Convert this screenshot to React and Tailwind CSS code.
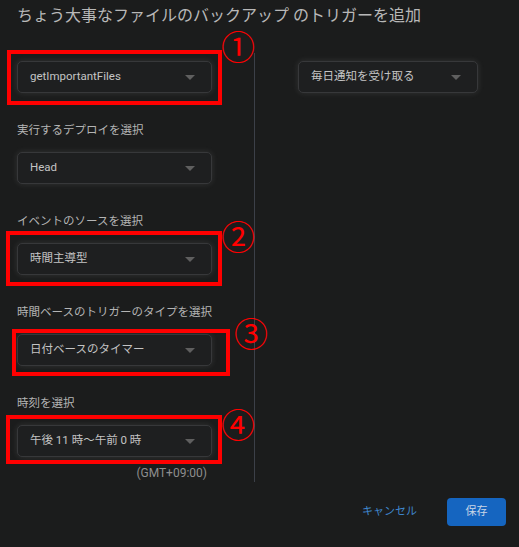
import React from "react";

const FONT = { fontFamily: "Roboto, 'Noto Sans CJK JP', 'Noto Sans', sans-serif" };

function Caret() {
  return (
    <svg width="10" height="5" viewBox="0 0 10 5" className="shrink-0">
      <path d="M0 0 L10 0 L5 5 Z" fill="#5f5f5f" />
    </svg>
  );
}

function Select({ value, className = "" }) {
  return (
    <div
      className={`h-8 flex items-center justify-between pl-3 pr-4 rounded-[5px] bg-[#1e1f20] border border-[#37383a] shadow-[0_0_6px_rgba(200,200,200,0.14)] ${className}`}
    >
      <span className="text-[11.5px] text-[#c4c4c4] whitespace-nowrap">{value}</span>
      <Caret />
    </div>
  );
}

// red annotation frame + circled number drawn over a select
function Marked({ value, frame, badge, num }) {
  return (
    <div className="relative">
      <Select value={value} className="w-[195px]" />
      <div className={`absolute border-[4px] border-[#ff0000] pointer-events-none ${frame}`} />
      <span
        className={`absolute text-[34px] leading-none text-[#ff0000] ${badge}`}
        style={{ fontFamily: "'Noto Sans CJK JP', sans-serif" }}
      >
        {num}
      </span>
    </div>
  );
}

function Label({ children }) {
  return <div className="mt-[29px] h-4 leading-4 text-[11.5px] text-[#b4b4b4]">{children}</div>;
}

export default function App() {
  return (
    <div className="w-[519px] h-[547px] bg-[#1b1c1c] overflow-hidden" style={FONT}>
      <h1 className="pt-[6px] pl-[17px] leading-5 text-[16px] text-[#b8b8b8] whitespace-nowrap">
        ちょう大事なファイルのバックアップ のトリガーを追加
      </h1>

      <div className="flex mt-[27px]">
        <div className="w-[255px] border-r border-[#3c4048] pl-[17px] pt-[8px] pb-[1px]">
          <Marked
            value="getImportantFiles"
            num="①"
            frame="-left-[10px] -top-[11px] -bottom-[12px] w-[215px]"
            badge="left-[204px] -top-[32px]"
          />

          <Label>実行するデプロイを選択</Label>
          <div className="mt-[14px]">
            <Select value="Head" className="w-[195px]" />
          </div>

          <Label>イベントのソースを選択</Label>
          <div className="mt-[14px]">
            <Marked
              value="時間主導型"
              num="②"
              frame="-left-[11px] -top-[12px] -bottom-[11px] w-[216px]"
              badge="left-[204px] -top-[24px]"
            />
          </div>

          <Label>時間ベースのトリガーのタイプを選択</Label>
          <div className="mt-[14px]">
            <Marked
              value="日付ベースのタイマー"
              num="③"
              frame="-left-[5px] -top-[5px] -bottom-[10px] w-[218px]"
              badge="left-[217px] -top-[18px]"
            />
          </div>

          <Label>時刻を選択</Label>
          <div className="mt-[14px]">
            <Marked
              value="午後 11 時～午前 0 時"
              num="④"
              frame="-left-[11px] -top-[10px] -bottom-[7px] w-[216px]"
              badge="left-[204px] -top-[18px]"
            />
          </div>

          <div className="mt-[8px] w-[195px] pr-[5px] h-4 leading-4 text-right text-[12px] text-[#8e8e8e]">
            (GMT+09:00)
          </div>
        </div>

        <div className="pl-[43px] pt-[8px]">
          <Select value="毎日通知を受け取る" className="w-[180px]" />
        </div>
      </div>

      <div className="flex justify-end items-center gap-[30px] pr-[13px] mt-[16px]">
        <button className="text-[11px] text-[#3f86cc]">キャンセル</button>
        <button className="w-[59px] h-7 rounded-[4px] bg-[#1565c0] text-[11px] text-[#c9d6e6]">
          保存
        </button>
      </div>
    </div>
  );
}
